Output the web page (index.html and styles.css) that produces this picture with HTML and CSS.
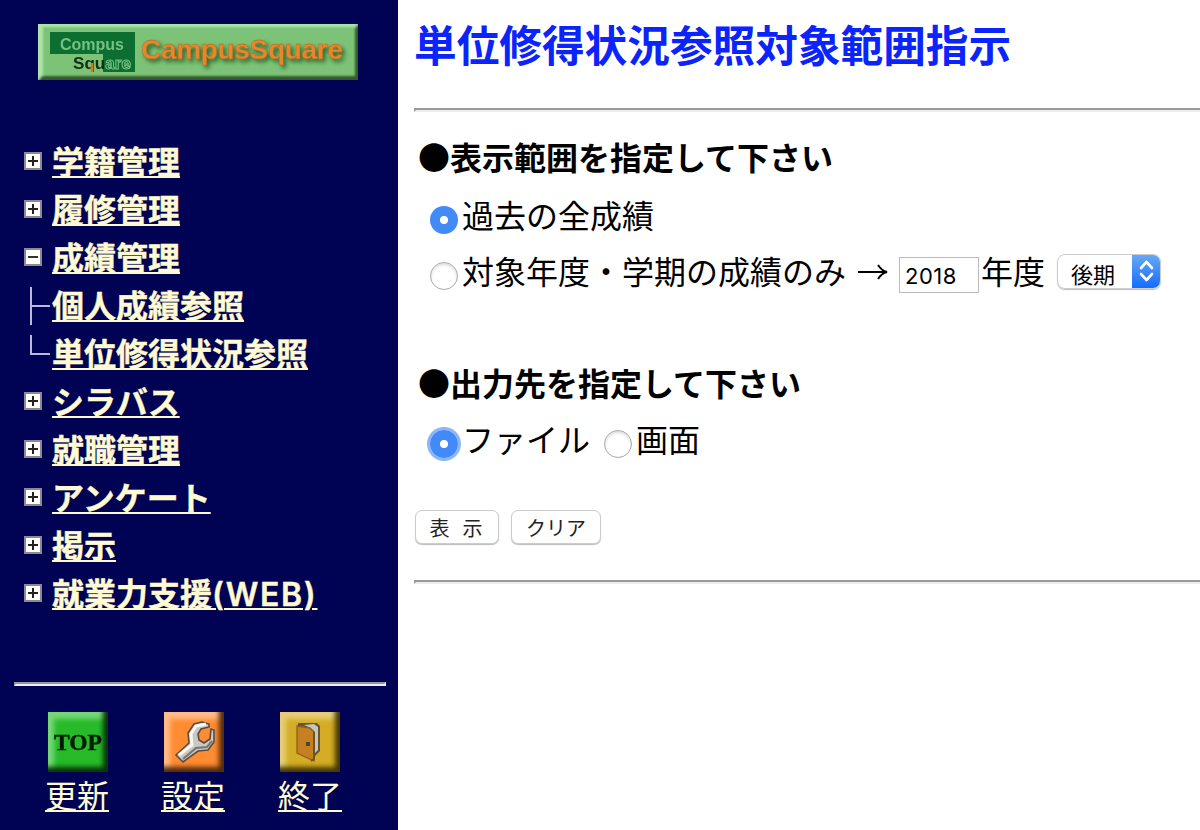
FILE: index.html
```html
<!DOCTYPE html>
<html lang="ja">
<head>
<meta charset="utf-8">
<title>単位修得状況参照対象範囲指示</title>
<link rel="stylesheet" href="styles.css">
</head>
<body>
<div class="page">
  <aside class="sidebar">
    <svg class="logo" width="320" height="56" viewBox="0 0 320 56">
      <defs>
        <filter id="soft" x="-5%" y="-20%" width="110%" height="140%"><feGaussianBlur stdDeviation="0.5"/></filter>
        <filter id="edge" x="-5%" y="-50%" width="110%" height="200%"><feGaussianBlur stdDeviation="1.2"/></filter>
        <filter id="shade" x="-10%" y="-30%" width="120%" height="180%"><feGaussianBlur in="SourceGraphic" stdDeviation="0.5" result="s"/><feDropShadow in="s" dx="2.5" dy="3" stdDeviation="2" flood-color="#24501c" flood-opacity="0.9"/></filter>
      </defs>
      <rect width="320" height="56" fill="#7cc377"/>
      <g filter="url(#edge)">
        <path d="M-4 -4H324L317 3H5V51L-4 60Z" fill="#aee3aa"/>
        <path d="M324 -4V60H-2L4 52H317V4Z" fill="#305a2c"/>
      </g>
      <g filter="url(#soft)">
        <path d="M12 8H97V48H65V30H12Z" fill="#0b6e33"/>
        <text class="logo-mini" x="22" y="26" textLength="64" lengthAdjust="spacingAndGlyphs" fill="#76c080">Compus</text>
        <text class="logo-mini" x="35" y="45" textLength="58" lengthAdjust="spacingAndGlyphs" fill="#162d16">Squ<tspan fill="#0b6e33" stroke="#76c080" stroke-width="1">are</tspan></text>
        <path d="M54 39v9" stroke="#d97818" stroke-width="2.5"/>
      </g>
      <g filter="url(#shade)">
        <text class="logo-name" x="103" y="35" textLength="202" lengthAdjust="spacing">CampusSquare</text>
      </g>
    </svg>

    <ul class="menu">
      <li><span class="box plus"></span><a>学籍管理</a></li>
      <li><span class="box plus"></span><a>履修管理</a></li>
      <li><span class="box"></span><a>成績管理</a></li>
      <li><svg class="branch" width="22" height="48" viewBox="0 0 22 48"><path d="M3 6V44M3 25H22" /></svg><a>個人成績参照</a></li>
      <li><svg class="branch" width="22" height="48" viewBox="0 0 22 48"><path d="M3 6V25H22" /></svg><a>単位修得状況参照</a></li>
      <li><span class="box plus"></span><a>シラバス</a></li>
      <li><span class="box plus"></span><a>就職管理</a></li>
      <li><span class="box plus"></span><a>アンケート</a></li>
      <li><span class="box plus"></span><a>掲示</a></li>
      <li><span class="box plus"></span><a>就業力支援<span class="latin">(WEB)</span></a></li>
    </ul>

    <hr class="rule side-rule">

    <div class="tools">
      <a class="tool">
        <span class="tile green"><svg width="60" height="60" viewBox="0 0 60 60"><g filter="url(#soft)"><text class="top" x="6" y="38" textLength="48" lengthAdjust="spacingAndGlyphs" stroke="#061b06" stroke-width=".4">TOP</text></g></svg></span>
        <span class="tool-name">更新</span>
      </a>
      <a class="tool">
        <span class="tile orange"><svg width="60" height="60" viewBox="0 0 60 60">
          <g filter="url(#soft)">
            <path d="M12 43L25 31L24 21L30 12L38 10L45 12V15L37 17L34 22L35 28L40 31L46 27L47 17L50 18V30L44 38L34 39L19 50Z" fill="#c9c9c2" stroke="#5d4b3e" stroke-width="1.6"/>
            <path d="M15 43L28 33L27 22L32 14L42 12" fill="none" stroke="#fbf8ef" stroke-width="3"/>
            <path d="M19 47L32 36L43 35L48 29" fill="none" stroke="#777672" stroke-width="2"/>
          </g>
        </svg></span>
        <span class="tool-name">設定</span>
      </a>
      <a class="tool last">
        <span class="tile gold"><svg width="60" height="60" viewBox="0 0 60 60">
          <g filter="url(#soft)">
            <path d="M18 14V11H37L40 14V39L35 44V20L31 16Z" fill="#665534"/>
            <path d="M24 13L34 12L38 15V38L35 41V20L31 16Z" fill="#c5c6bd"/>
            <path d="M17 14L30 16L34 20V49L17 41Z" fill="#c68020" stroke="#89611c" stroke-width="1.3"/>
            <path d="M34 20V47L31 49" fill="none" stroke="#695223" stroke-width="2"/>
            <rect x="26" y="30" width="4" height="4" fill="#4d4433"/>
          </g>
        </svg></span>
        <span class="tool-name">終了</span>
      </a>
    </div>
  </aside>

  <main class="main">
    <h1>単位修得状況参照対象範囲指示</h1>
    <hr class="rule">
    <h2 class="first">●表示範囲を指定して下さい</h2>
    <div class="row"><input type="radio" name="range" checked><label>過去の全成績</label></div>
    <div class="row"><input type="radio" name="range"><label>対象年度・学期の成績のみ</label><svg class="arrow" width="32" height="20" viewBox="0 0 32 20"><path d="M1 10H29M21 3Q25 9 30 10Q25 11 21 17"/></svg><input class="year" type="text" value="2018"><span class="unit">年度</span><span class="select"><span class="value">後期</span><span class="arrows"><svg width="29" height="34" viewBox="0 0 29 34"><path d="M9 14L14.5 8L20 14M9 20L14.5 26L20 20"/></svg></span></span></div>
    <h2 class="second">●出力先を指定して下さい</h2>
    <div class="row"><input class="focused" type="radio" name="output" checked><label>ファイル</label><input class="inline" type="radio" name="output"><label>画面</label></div>
    <div class="actions"><button class="show">表&nbsp; 示</button><button class="clear">クリア</button></div>
    <hr class="rule">
  </main>
</div>
</body>
</html>
```
FILE: styles.css
```css
* { box-sizing: border-box; }

body {
  margin: 0;
  background: #fff;
  color: #000;
  font-family: "Noto Sans CJK JP", sans-serif;
  font-size: 32px;
}

.page {
  display: flex;
  width: 1200px;
  height: 830px;
  overflow: hidden;
}

.rule {
  height: 4px;
  margin: 0;
  border: 2px solid;
  border-color: #999 #eee #eee #999;
}

.main .rule { margin-right: -4px; }

/* sidebar */
.sidebar {
  flex: none;
  width: 398px;
  height: 830px;
  padding: 24px 12px 0 14px;
  background: #000254;
  color: #fffad2;
}

.logo {
  display: block;
  margin-left: 24px;
}

.logo-mini { font: 700 16.5px "Liberation Sans", sans-serif; }

.logo-name {
  font: 700 28px "Liberation Sans", sans-serif;
  fill: #e8872b;
  stroke: #a9601c;
  stroke-width: 0.3;
}

.menu {
  margin: 57px 0 0;
  padding: 0 0 0 10px;
  list-style: none;
}

.menu li {
  display: flex;
  align-items: center;
  height: 48px;
}

.menu a {
  font-weight: 700;
  line-height: 48px;
  margin-top: -2px;
  -webkit-text-stroke: 0.4px #fffad2;
}

.menu a, .tool-name {
  text-decoration: underline;
  text-decoration-thickness: 2px;
  text-underline-offset: 2px;
}

.latin {
  font-family: Inter, sans-serif;
  font-weight: 600;
  letter-spacing: 1.7px;
  line-height: 1;
}

.box {
  flex: none;
  width: 18px;
  height: 18px;
  margin-right: 10px;
  border: 2px solid #8b8b8b;
  background: linear-gradient(#333, #333) center / 10px 2px no-repeat #fff;
}

.box.plus {
  background:
    linear-gradient(#222, #222) center / 10px 2px no-repeat,
    linear-gradient(#222, #222) center / 2px 10px no-repeat,
    #fff;
}

.branch {
  flex: none;
  margin: 0 2px 0 4px;
  fill: none;
  stroke: #b9b9da;
  stroke-width: 2;
}

.side-rule { margin-top: 65px; }

.tools {
  display: flex;
  gap: 52px;
  padding: 26px 0 0 31px;
}

.tool {
  display: flex;
  flex-direction: column;
  width: 64px;
}

.tile {
  width: 60px;
  height: 60px;
  margin-left: 3px;
}

.tile svg { display: block; }

.green {
  background: #27ba29;
  box-shadow: inset -5px -5px 5px #073507, inset 6px 7px 5px #77d778;
}

.orange {
  background: #ff8b32;
  box-shadow: inset -5px -5px 5px #502a0c, inset 6px 7px 5px #ffbd8a;
}

.gold {
  background: #d4ad25;
  box-shadow: inset -5px -5px 5px #443705, inset 6px 7px 5px #e7ce76;
}

.top { font: 700 24px "Liberation Serif", serif; fill: #061b06; }

.tool-name {
  margin-top: -2px;
  line-height: 48px;
  white-space: nowrap;
}

.last .tool-name { padding-left: 1px; }

/* main form */
.main {
  flex: 1;
  padding: 14px 0 0 16px;
}

h1 {
  height: 94px;
  margin: 0;
  color: #0b24fb;
  font-size: 42.67px;
  font-weight: 700;
  line-height: 60px;
}

h2 {
  margin: 0 0 0 4px;
  font-size: 32px;
  font-weight: 700;
  line-height: 48px;
}

.first { margin-top: 20px; margin-bottom: 8px; }
.second { margin-top: 58px; margin-bottom: 6px; }

.row {
  display: flex;
  align-items: center;
  height: 56px;
  padding-left: 16px;
}

label, .unit {
  margin-top: -5px;
  line-height: 48px;
  white-space: nowrap;
}

input[type="radio"] {
  appearance: none;
  flex: none;
  width: 28px;
  height: 28px;
  margin: 8px 4px 0 0;
  border: 1px solid #aaa;
  border-radius: 50%;
  background: #fff;
  box-shadow: inset 0 2px 3px #ddd;
}

input[type="radio"]:checked {
  border: 0;
  background: radial-gradient(circle, #fff 0 3.7px, #428af8 4.5px);
  box-shadow: none;
}

input.focused[type="radio"] { box-shadow: 0 0 0 3px #8ab6fa; }
input.inline[type="radio"] { margin-left: 14px; }

.arrow {
  margin: -1px 9px 0 11px;
  fill: none;
  stroke: #000;
  stroke-width: 2;
}

.year {
  width: 80px;
  height: 36px;
  margin: 6px 2px 0 1px;
  padding: 1px 4px 0 5px;
  border: 1px solid #bbb;
  font: 22px/30px Inter, sans-serif;
  letter-spacing: 0.5px;
}

.select {
  display: flex;
  width: 104px;
  height: 35px;
  margin: -1px 0 0 12px;
  border: 1px solid #ccc;
  border-radius: 8px;
  box-shadow: 0 1px 1px #bbb;
  overflow: hidden;
}

.value {
  flex: 1;
  padding: 2px 0 0 13px;
  font-size: 22px;
  line-height: 32px;
}

.arrows {
  width: 29px;
  margin: -1px -1px -1px 0;
  background: linear-gradient(#69a9f8, #126bfc);
}

.arrows svg {
  display: block;
  fill: none;
  stroke: #fff;
  stroke-width: 2.6;
  stroke-linecap: round;
  stroke-linejoin: round;
}

.actions {
  display: flex;
  gap: 12px;
  height: 70px;
  margin: 42px 0 0 1px;
}

button {
  height: 34px;
  padding: 1px 0 0;
  border: 1px solid #ccc;
  border-radius: 7px;
  background: #fff;
  box-shadow: 0 1px 1px #bbb;
  color: #222;
  font: 20px/32px "Noto Sans CJK JP", sans-serif;
}

.show { width: 84px; padding-right: 2px; word-spacing: 2px; }
.clear { width: 90px; }
```
